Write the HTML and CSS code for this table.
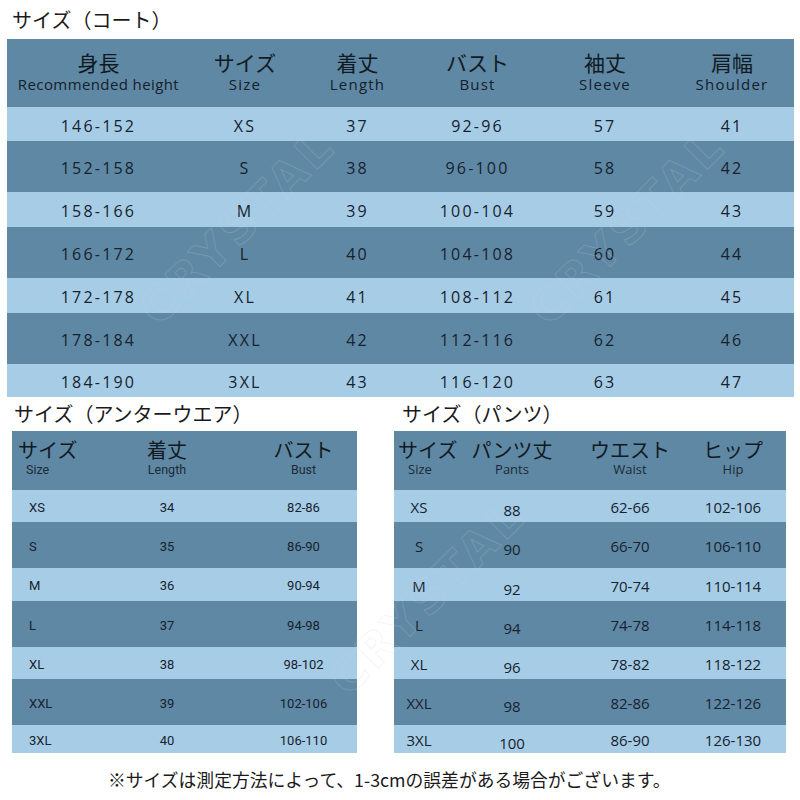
FILE: index.html
```html
<!DOCTYPE html>
<html lang="ja">
<head>
<meta charset="utf-8">
<title>サイズ表</title>
<link rel="stylesheet" href="styles.css">
</head>
<body>
<div class="page">
  <h2 class="title coat-title">サイズ（コート）</h2>
  <div class="tbl coat">
    <div class="row head">
      <div class="cell"><span class="jp">身長</span><span class="en">Recommended height</span></div>
      <div class="cell"><span class="jp">サイズ</span><span class="en">Size</span></div>
      <div class="cell"><span class="jp">着丈</span><span class="en">Length</span></div>
      <div class="cell"><span class="jp">バスト</span><span class="en">Bust</span></div>
      <div class="cell"><span class="jp">袖丈</span><span class="en">Sleeve</span></div>
      <div class="cell"><span class="jp">肩幅</span><span class="en">Shoulder</span></div>
    </div>
    <div class="row light r34"><div class="cell">146-152</div><div class="cell">XS</div><div class="cell">37</div><div class="cell">92-96</div><div class="cell">57</div><div class="cell">41</div></div>
    <div class="row dark r51"><div class="cell">152-158</div><div class="cell">S</div><div class="cell">38</div><div class="cell">96-100</div><div class="cell">58</div><div class="cell">42</div></div>
    <div class="row light r35"><div class="cell">158-166</div><div class="cell">M</div><div class="cell">39</div><div class="cell">100-104</div><div class="cell">59</div><div class="cell">43</div></div>
    <div class="row dark r51"><div class="cell">166-172</div><div class="cell">L</div><div class="cell">40</div><div class="cell">104-108</div><div class="cell">60</div><div class="cell">44</div></div>
    <div class="row light r35"><div class="cell">172-178</div><div class="cell">XL</div><div class="cell">41</div><div class="cell">108-112</div><div class="cell">61</div><div class="cell">45</div></div>
    <div class="row dark r51"><div class="cell">178-184</div><div class="cell">XXL</div><div class="cell">42</div><div class="cell">112-116</div><div class="cell">62</div><div class="cell">46</div></div>
    <div class="row light r33"><div class="cell">184-190</div><div class="cell">3XL</div><div class="cell">43</div><div class="cell">116-120</div><div class="cell">63</div><div class="cell">47</div></div>
  </div>

  <div class="lower">
    <section class="sec under">
      <h2 class="title">サイズ（アンターウエア）</h2>
      <div class="tbl small">
        <div class="row head">
          <div class="cell first"><span class="jp">サイズ</span><span class="en">Size</span></div>
          <div class="cell"><span class="jp">着丈</span><span class="en">Length</span></div>
          <div class="cell"><span class="jp">バスト</span><span class="en">Bust</span></div>
        </div>
        <div class="row light s33"><div class="cell first">XS</div><div class="cell">34</div><div class="cell">82-86</div></div>
        <div class="row dark s45"><div class="cell first">S</div><div class="cell">35</div><div class="cell">86-90</div></div>
        <div class="row light s34"><div class="cell first">M</div><div class="cell">36</div><div class="cell">90-94</div></div>
        <div class="row dark s45"><div class="cell first">L</div><div class="cell">37</div><div class="cell">94-98</div></div>
        <div class="row light s33"><div class="cell first">XL</div><div class="cell">38</div><div class="cell">98-102</div></div>
        <div class="row dark s45"><div class="cell first">XXL</div><div class="cell">39</div><div class="cell">102-106</div></div>
        <div class="row light s27"><div class="cell first">3XL</div><div class="cell">40</div><div class="cell">106-110</div></div>
      </div>
    </section>
    <section class="sec pants">
      <h2 class="title">サイズ（パンツ）</h2>
      <div class="tbl small">
        <div class="row head">
          <div class="cell first"><span class="jp">サイズ</span><span class="en">Size</span></div>
          <div class="cell"><span class="jp">パンツ丈</span><span class="en">Pants</span></div>
          <div class="cell"><span class="jp">ウエスト</span><span class="en">Waist</span></div>
          <div class="cell"><span class="jp">ヒップ</span><span class="en">Hip</span></div>
        </div>
        <div class="row light s33"><div class="cell first">XS</div><div class="cell low">88</div><div class="cell">62-66</div><div class="cell">102-106</div></div>
        <div class="row dark s45"><div class="cell first">S</div><div class="cell low">90</div><div class="cell">66-70</div><div class="cell">106-110</div></div>
        <div class="row light s34"><div class="cell first">M</div><div class="cell low">92</div><div class="cell">70-74</div><div class="cell">110-114</div></div>
        <div class="row dark s45"><div class="cell first">L</div><div class="cell low">94</div><div class="cell">74-78</div><div class="cell">114-118</div></div>
        <div class="row light s33"><div class="cell first">XL</div><div class="cell low">96</div><div class="cell">78-82</div><div class="cell">118-122</div></div>
        <div class="row dark s45"><div class="cell first">XXL</div><div class="cell low">98</div><div class="cell">82-86</div><div class="cell">122-126</div></div>
        <div class="row light s27"><div class="cell first">3XL</div><div class="cell low">100</div><div class="cell">86-90</div><div class="cell">126-130</div></div>
      </div>
    </section>
  </div>

  <p class="note">※サイズは測定方法によって、1-3cmの誤差がある場合がございます。</p>

  <div class="wm wm1">CRYSTAL</div>
  <div class="wm wm2">CRYSTAL</div>
  <div class="wm wm3">CRYSTAL</div>
</div>
</body>
</html>
```

FILE: styles.css
```css
* { box-sizing: border-box; }
html, body { margin: 0; padding: 0; background: #ffffff; }
body {
  font-family: "Noto Sans CJK JP", "Noto Sans", sans-serif;
  color: #16222e;
}
.page {
  position: relative;
  width: 800px;
  height: 800px;
  overflow: hidden;
}
.title {
  margin: 0;
  font-weight: 400;
  font-size: 20px;
  line-height: 28px;
  color: #1a1a1a;
  white-space: nowrap;
}
.coat-title {
  height: 39px;
  padding: 6px 0 0 12px;
}
.tbl { display: flex; flex-direction: column; }
.row { display: grid; align-items: center; }
.light { background: #a7cde6; }
.dark { background: #5f88a4; }
.head { background: #5f88a4; }
.cell {
  display: flex;
  flex-direction: column;
  align-items: center;
  justify-content: center;
  white-space: nowrap;
}
.jp { font-family: "Noto Sans CJK JP", sans-serif; color: #111a22; }
.en { color: #14202b; }

/* coat table */
.coat {
  margin-left: 7px;
  width: 787px;
  font-family: "Open Sans", "DejaVu Sans", sans-serif;
  font-size: 16px;
  letter-spacing: 2.2px;
}
.coat .row { grid-template-columns: 183px 110px 115px 125px 130px 124px; }
.coat .head { height: 68px; }
.coat .head .cell { padding-bottom: 2px; }
.coat .head .jp { font-size: 21px; line-height: 23px; letter-spacing: 0; }
.coat .head .en { font-size: 15px; line-height: 20px; letter-spacing: 1.2px; }
.coat .head .cell:first-child .en { letter-spacing: 0.4px; }
.coat .row:not(.head) .cell { padding-top: 3px; }
.r33 { height: 33px; }
.r34 { height: 34px; }
.r35 { height: 35px; }
.r51 { height: 51px; }

/* lower tables */
.lower { display: flex; gap: 37px; padding-left: 12px; }
.sec .title { height: 34px; padding-top: 3px; }
.under { width: 345px; }
.under .title { padding-left: 2px; }
.pants { width: 392px; }
.pants .title { padding-left: 8px; }
.small {
  font-family: "Roboto", "Noto Sans", sans-serif;
  font-size: 14px;
}
.small .head { height: 59px; }
.small .head .cell { padding-bottom: 6px; }
.small .head .jp { font-size: 20px; line-height: 24px; }
.small .head .en { font-size: 12.5px; line-height: 15px; color: #1c2a36; }
.under .row { grid-template-columns: 72px 166px 107px; }
.under .head .first { align-items: flex-start; padding-left: 6px; }
.under .head .first .en { padding-left: 8px; }
.under .row:not(.head) .first { align-items: flex-start; padding-left: 17px; }
.under .row:not(.head) .cell { font-size: 13px; padding-top: 2px; }
.pants .row { grid-template-columns: 50px 136px 100px 106px; }
.pants .small { font-family: "Open Sans", "Noto Sans", sans-serif; font-size: 15px; }
.pants .head .en { font-family: "Open Sans", sans-serif; font-size: 13px; }
.pants .head .first { align-items: flex-start; padding-left: 4px; overflow: visible; }
.pants .head .first .en { padding-left: 10px; }
.pants .row:not(.head) .cell { padding-top: 2px; }
.pants .row:not(.head) .low { padding-top: 8px; }
.s27 { height: 28px; }
.s33 { height: 32px; }
.s34 { height: 33px; }
.s45 { height: 46px; }

.note {
  margin: 14px 0 0 0;
  padding-left: 108px;
  font-size: 17.8px;
  line-height: 24px;
  color: #1a1a1a;
  white-space: nowrap;
}

/* watermark overlays */
.wm {
  position: absolute;
  font-family: "DejaVu Sans", sans-serif;
  font-weight: 700;
  font-size: 46px;
  letter-spacing: 4px;
  color: rgba(255, 255, 255, 0);
  -webkit-text-stroke: 1px rgba(200, 210, 220, 0.22);
  transform: rotate(-45deg);
  pointer-events: none;
  white-space: nowrap;
}
.wm1 { left: 110px; top: 200px; }
.wm2 { left: 500px; top: 200px; }
.wm3 { left: 300px; top: 570px; }
```
